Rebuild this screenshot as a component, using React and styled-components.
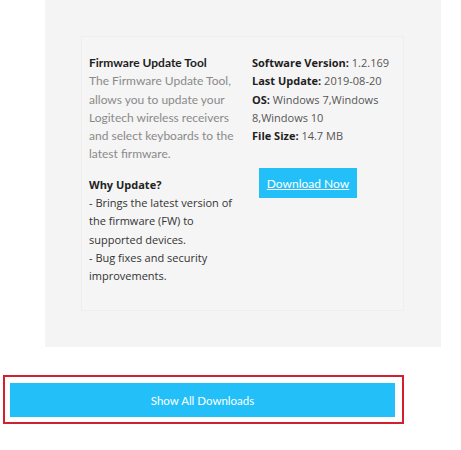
import styled, {createGlobalStyle} from 'styled-components';

const GlobalStyle = createGlobalStyle`
  html, body {
    margin: 0;
    padding: 0;
    background: #ffffff;
  }
  * {
    box-sizing: border-box;
  }
`;

const App = () => {
  return (
    <>
      <GlobalStyle />
      <Page>
        <OuterPanel>
          <Card>
            <Column>
              <Heading>Firmware Update Tool</Heading>
              <Description>
                The Firmware Update Tool, allows you to update your Logitech
                wireless receivers and select keyboards to the latest firmware.
              </Description>
              <SubHeading>Why Update?</SubHeading>
              <Body>
                - Brings the latest version of the firmware (FW) to supported
                devices.
                <br />- Bug fixes and security improvements.
              </Body>
            </Column>
            <Column right>
              <Spec>
                <Label>Software Version:</Label> 1.2.169
              </Spec>
              <Spec>
                <Label>Last Update:</Label> 2019-08-20
              </Spec>
              <Spec>
                <Label>OS:</Label> Windows 7,Windows 8,Windows 10
              </Spec>
              <Spec>
                <Label>File Size:</Label> 14.7 MB
              </Spec>
              <DownloadButton href="#">Download Now</DownloadButton>
            </Column>
          </Card>
        </OuterPanel>
        <Highlight>
          <ShowAllButton>Show All Downloads</ShowAllButton>
        </Highlight>
      </Page>
    </>
  );
};

const Page = styled.div`
  width: 461px;
  height: 450px;
  display: flex;
  flex-direction: column;
`;

const OuterPanel = styled.div`
  width: 396px;
  height: 347px;
  margin-left: 45px;
  padding: 36px 37px 36px 36px;
  background-color: #f4f4f4;
`;

const Card = styled.div`
  height: 275px;
  display: flex;
  gap: 15px;
  padding: 17px 0 0 7px;
  background-color: #f5f5f5;
  border: 1px solid #eeeeee;
`;

const Column = styled.div`
  width: ${(props) => (props.right ? '145px' : '148px')};
  display: flex;
  flex-direction: column;
  align-items: flex-start;
`;

const Heading = styled.h3`
  margin: 0;
  font-family: Lato, 'Liberation Sans', sans-serif;
  font-size: 12px;
  font-weight: 700;
  line-height: 18.3px;
  color: #1e1e1e;
`;

const Description = styled.p`
  margin: 0 0 12px;
  font-family: Lato, 'Liberation Sans', sans-serif;
  font-size: 12px;
  line-height: 18.3px;
  color: #8a8a8a;
`;

const SubHeading = styled.h4`
  margin: 0;
  font-family: 'Open Sans', 'Liberation Sans', sans-serif;
  font-size: 11px;
  font-weight: 700;
  line-height: 18.3px;
  color: #222;
`;

const Body = styled.p`
  margin: 0;
  font-family: 'Open Sans', 'Liberation Sans', sans-serif;
  font-size: 11px;
  line-height: 18.3px;
  color: #333;
`;

const Spec = styled.p`
  margin: 0;
  font-family: 'Open Sans', 'Liberation Sans', sans-serif;
  font-size: 11px;
  line-height: 18.3px;
  color: #555;
`;

const Label = styled.b`
  font-weight: 700;
  color: #1e1e1e;
`;

const DownloadButton = styled.a`
  width: 98px;
  height: 30px;
  margin: 23px 0 0 7px;
  display: flex;
  align-items: center;
  justify-content: center;
  font-family: Lato, 'Liberation Sans', sans-serif;
  font-size: 12px;
  color: #ffffff;
  text-decoration: underline;
  background-color: #22bff9;
`;

const Highlight = styled.div`
  width: 401px;
  height: 49px;
  margin: 28px 0 0 3px;
  padding: 6px 7px 5px 5px;
  border: 2px solid #d2202c;
`;

const ShowAllButton = styled.button`
  width: 100%;
  height: 100%;
  border: none;
  padding: 0;
  font-family: Lato, 'Liberation Sans', sans-serif;
  font-size: 11.5px;
  color: #ffffff;
  background-color: #22bff9;
  cursor: pointer;
`;

export default App;
